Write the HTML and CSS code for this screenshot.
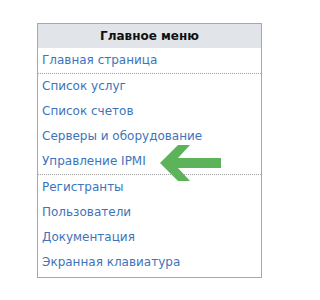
FILE: index.html
```html
<!DOCTYPE html>
<html>
<head>
<meta charset="utf-8">
<link rel="stylesheet" href="styles.css">
</head>
<body>
<div class="menu">
  <div class="menu-title">Главное меню</div>
  <div class="group">
    <a class="item" href="#">Главная страница</a>
  </div>
  <div class="group">
    <a class="item" href="#">Список услуг</a>
    <a class="item" href="#">Список счетов</a>
    <a class="item" href="#">Серверы и оборудование</a>
    <a class="item" href="#">Управление IPMI
      <svg class="arrow" width="61" height="36" viewBox="0 0 61 36"><polygon points="0,18 18,0 30,0 18,13 61,13 61,23 18,23 30,36 18,36" fill="#5cb35a"/></svg>
    </a>
  </div>
  <div class="group">
    <a class="item" href="#">Регистранты</a>
    <a class="item" href="#">Пользователи</a>
    <a class="item" href="#">Документация</a>
    <a class="item" href="#">Экранная клавиатура</a>
  </div>
</div>
</body>
</html>
```
FILE: styles.css
```css
html, body { margin: 0; padding: 0; background: #fff; }
body { padding: 23px 0 0 37px; font-family: "DejaVu Sans", Verdana, sans-serif; }
.menu {
  width: 223px;
  border: 1px solid #a8a8a8;
  font-size: 12px;
}
.menu-title {
  background: #e1e4e8;
  height: 24px;
  line-height: 24px;
  text-align: center;
  font-weight: bold;
  color: #111;
}
.group { border-bottom: 1px dotted #a0a0a0; }
.group:last-child { border-bottom: none; padding-bottom: 2px; }
.item {
  display: block;
  position: relative;
  height: 25px;
  line-height: 25px;
  padding-left: 4px;
  color: #3c74bb;
  text-decoration: none;
}
.arrow { position: absolute; left: 122px; top: -4px; z-index: 1; }
```
